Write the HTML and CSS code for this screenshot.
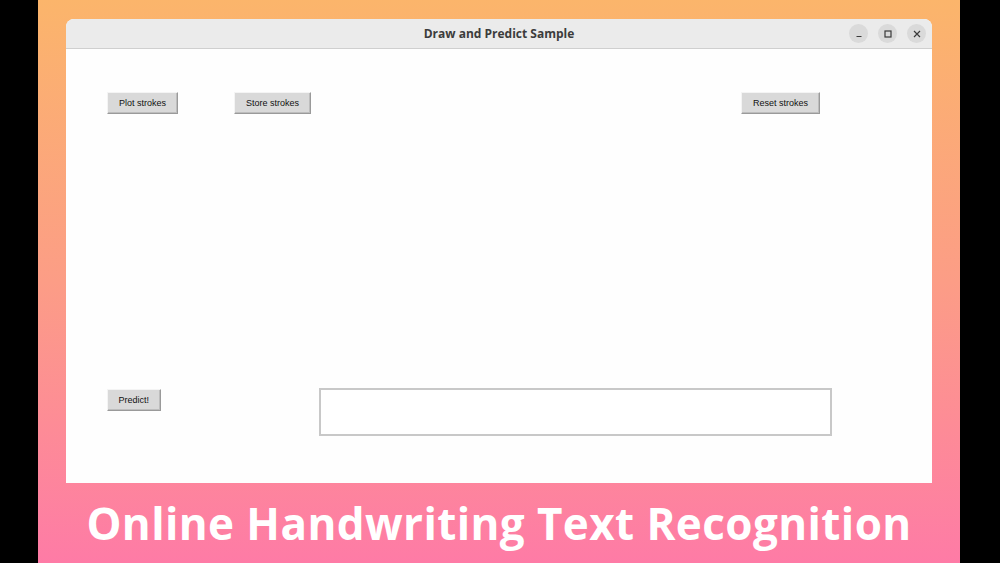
FILE: index.html
```html
<!DOCTYPE html>
<html>
<head>
<meta charset="utf-8">
<link rel="stylesheet" href="styles.css">
</head>
<body>
<div class="stage">
  <div class="window">
    <div class="titlebar">
      <span class="title">Draw and Predict Sample</span>
      <div class="controls">
        <span class="ctl"><svg width="10" height="10" viewBox="0 0 10 10"><path d="M2.5 7.5h5" stroke="#3a3a3a" stroke-width="1.2"/></svg></span>
        <span class="ctl"><svg width="10" height="10" viewBox="0 0 10 10"><rect x="2" y="2" width="6" height="6" fill="none" stroke="#3a3a3a" stroke-width="1.2"/></svg></span>
        <span class="ctl"><svg width="10" height="10" viewBox="0 0 10 10"><path d="M2 2l6 6M8 2l-6 6" stroke="#3a3a3a" stroke-width="1.2"/></svg></span>
      </div>
    </div>
    <div class="content">
      <div class="toprow">
        <button class="tkbtn">Plot strokes</button>
        <button class="tkbtn store">Store strokes</button>
        <span class="spacer"></span>
        <button class="tkbtn">Reset strokes</button>
      </div>
      <div class="bottomrow">
        <button class="tkbtn predict">Predict!</button>
        <div class="entry"></div>
      </div>
    </div>
  </div>
  <div class="caption">Online Handwriting Text Recognition</div>
</div>
</body>
</html>
```
FILE: styles.css
```css
html, body {
  margin: 0;
  padding: 0;
  background: #000;
  width: 1000px;
  height: 563px;
  overflow: hidden;
}
.stage {
  margin-left: 38px;
  width: 922px;
  height: 563px;
  background: linear-gradient(180deg, #fbb56b 0%, #fc9d86 50%, #fe7ba6 100%);
  display: flex;
  flex-direction: column;
  padding-top: 19px;
  box-sizing: border-box;
}
.window {
  margin-left: 28px;
  width: 866px;
  height: 464px;
  background: #fefefe;
  border-radius: 8px 8px 0 0;
  display: flex;
  flex-direction: column;
  overflow: hidden;
  flex: none;
}
.titlebar {
  height: 29px;
  background: #ebebeb;
  border-bottom: 1px solid #cfcfcf;
  display: flex;
  align-items: center;
  justify-content: center;
  position: relative;
  flex: none;
}
.title {
  font-family: "Open Sans", "DejaVu Sans", sans-serif;
  font-weight: 700;
  font-size: 12px;
  color: #3c3c3c;
}
.controls {
  position: absolute;
  right: 6px;
  top: 5px;
  display: flex;
  gap: 10px;
}
.ctl {
  width: 19px;
  height: 19px;
  border-radius: 50%;
  background: #dadada;
  display: flex;
  align-items: center;
  justify-content: center;
}
.content {
  flex: 1;
  display: flex;
  flex-direction: column;
  padding: 43px 112px 0 41px;
}
.toprow {
  display: flex;
  align-items: flex-start;
}
.spacer { flex: 1; }
.tkbtn {
  font-family: "Liberation Sans", Arial, sans-serif;
  font-size: 9px;
  color: #111;
  background: #d9d9d9;
  border: 1px solid;
  border-color: #f4f4f4 #9a9a9a #9a9a9a #f4f4f4;
  box-shadow: inset -1px -1px 0 #bdbdbd;
  height: 22px;
  padding: 0 11px;
  margin: 0;
  line-height: 20px;
  flex: none;
}
.store { margin-left: 56px; }
.bottomrow {
  display: flex;
  align-items: flex-start;
  margin-top: 274px;
}
.predict { margin-top: 1px; padding: 0 10.5px; }
.entry {
  flex: none;
  margin-left: 158px;
  width: 509px;
  height: 44px;
  border: 2px solid #c8c8c8;
  background: #fff;
}
.caption {
  font-family: "Open Sans", "Noto Sans", sans-serif;
  font-weight: 700;
  font-size: 44px;
  color: #fff;
  text-align: center;
  margin-top: 10px;
  letter-spacing: 0.4px;
}
```
